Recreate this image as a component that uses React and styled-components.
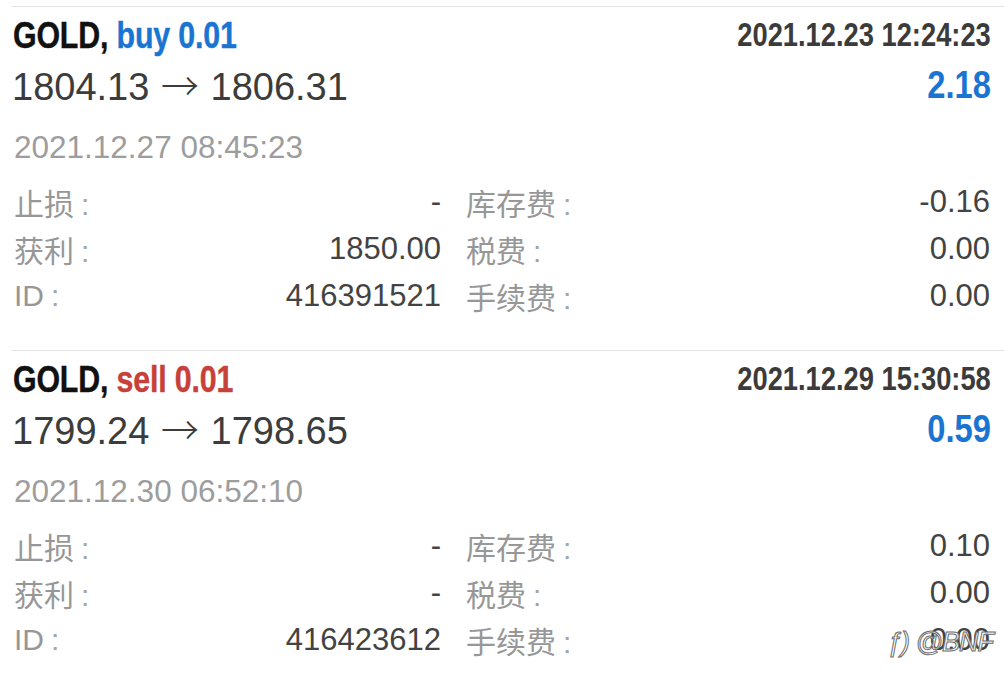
import React from "react";
import styled, { createGlobalStyle } from "styled-components";

const Global = createGlobalStyle`
  html, body { margin: 0; padding: 0; background: #fff; }
  body { width: 1004px; height: 688px; overflow: hidden; }
`;

const BOLD = `"Liberation Sans", Arial, sans-serif`;
const SANS = `"Liberation Sans", Arial, sans-serif`;
const CJK = `"Liberation Sans", "Noto Sans CJK SC", sans-serif`;

const Page = styled.div`
  position: relative;
  width: 1004px;
  height: 688px;
  padding-top: 6px;
  box-sizing: border-box;
  background: #fff;
`;

const Card = styled.section`
  margin-left: 12px;
  border-top: 1px solid #e3e3e3;
  padding: 0 13px 31px 1px;
`;

const Row = styled.div`
  display: flex;
  justify-content: space-between;
  align-items: center;
  height: ${(p) => p.$h}px;
  margin-top: ${(p) => p.$mt || 0}px;
`;

/* condensed bold face (iOS Helvetica Neue Condensed Bold look) */
const Condensed = styled.div`
  font-family: ${BOLD};
  font-weight: 700;
  line-height: 1;
  white-space: nowrap;
  transform: scaleX(0.82);
  transform-origin: ${(p) => (p.$end ? "right" : "left")} center;
`;

const Title = styled(Condensed)`
  font-size: 37px;
  color: #111;
  letter-spacing: -0.2px;
  -webkit-text-stroke: 0.4px #111;
`;

const Side = styled.span`
  color: ${(p) => (p.$type === "buy" ? "#1a74d2" : "#c7403a")};
  -webkit-text-stroke: 0.4px ${(p) => (p.$type === "buy" ? "#1a74d2" : "#c7403a")};
`;

const OpenTime = styled(Condensed)`
  font-size: 32.5px;
  color: #3b3b3b;
  transform: scaleX(0.84);
`;

const Profit = styled(Condensed)`
  font-size: 38px;
  color: #1a74d2;
  transform: scaleX(0.86);
`;

const Prices = styled.div`
  font-family: ${SANS};
  font-size: 38px;
  line-height: 1;
  color: #3c3c3c;
  white-space: nowrap;
  margin-left: -1px;
`;

const Arrow = styled.span`
  font-family: "Noto Sans CJK SC", sans-serif;
  font-weight: 300;
  display: inline-block;
  margin: 0 1px;
`;

const CloseTime = styled.div`
  font-family: ${SANS};
  font-size: 31.5px;
  line-height: 1;
  color: #9d9d9d;
  margin-left: 1px;
`;

const Details = styled.div`
  display: grid;
  grid-template-columns: 428px 525px;
  column-gap: 24px;
  grid-auto-rows: 47px;
  margin-top: 10px;
`;

const Cell = styled.div`
  display: flex;
  justify-content: space-between;
  align-items: center;
`;

const Label = styled.span`
  font-family: ${CJK};
  font-size: 30px;
  color: #979797;
  margin-left: 1px;
`;

const Colon = styled.span`
  margin-left: 7px;
  color: #a5a5a5;
`;

const Value = styled.span`
  font-family: ${SANS};
  font-size: 31px;
  color: #434343;
`;

const Watermark = styled.div`
  position: absolute;
  right: 11px;
  bottom: 30px;
  font-family: ${SANS};
  font-size: 27px;
  font-style: italic;
  color: rgba(255, 255, 255, 0.85);
  -webkit-text-stroke: 1px #6a6a6a;
  letter-spacing: -1px;
  white-space: nowrap;
`;

const trades = [
  {
    side: "buy",
    open: "2021.12.23 12:24:23",
    from: "1804.13",
    to: "1806.31",
    profit: "2.18",
    close: "2021.12.27 08:45:23",
    sl: "-",
    tp: "1850.00",
    id: "416391521",
    swap: "-0.16",
    tax: "0.00",
    fee: "0.00",
  },
  {
    side: "sell",
    open: "2021.12.29 15:30:58",
    from: "1799.24",
    to: "1798.65",
    profit: "0.59",
    close: "2021.12.30 06:52:10",
    sl: "-",
    tp: "-",
    id: "416423612",
    swap: "0.10",
    tax: "0.00",
    fee: "0.00",
  },
];

function Field({ label, value }) {
  return (
    <Cell>
      <Label>
        {label}
        <Colon>:</Colon>
      </Label>
      <Value>{value}</Value>
    </Cell>
  );
}

function TradeCard({ t }) {
  return (
    <Card>
      <Row $h={56}>
        <Title>
          GOLD, <Side $type={t.side}>{t.side} 0.01</Side>
        </Title>
        <OpenTime $end>{t.open}</OpenTime>
      </Row>
      <Row $h={44}>
        <Prices>
          {t.from} <Arrow>→</Arrow> {t.to}
        </Prices>
        <Profit $end>{t.profit}</Profit>
      </Row>
      <Row $h={40} $mt={21}>
        <CloseTime>{t.close}</CloseTime>
      </Row>
      <Details>
        <Field label="止损" value={t.sl} />
        <Field label="库存费" value={t.swap} />
        <Field label="获利" value={t.tp} />
        <Field label="税费" value={t.tax} />
        <Field label="ID" value={t.id} />
        <Field label="手续费" value={t.fee} />
      </Details>
    </Card>
  );
}

export default function App() {
  return (
    <Page>
      <Global />
      {trades.map((t) => (
        <TradeCard key={t.id} t={t} />
      ))}
      <Watermark>ƒ) @BNF</Watermark>
    </Page>
  );
}
